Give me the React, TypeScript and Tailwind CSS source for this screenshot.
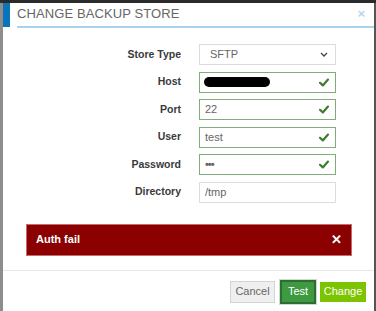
const Check = () => (
  <svg width="10" height="9" viewBox="0 0 10 9" className="absolute right-[7px] top-[6px]">
    <path d="M1 4.8 L3.8 7.4 L9 1.6" fill="none" stroke="#3c7d2c" strokeWidth="2.2" strokeLinecap="round" strokeLinejoin="round" />
  </svg>
)

const Field = ({ label, children }: { label: string; children: React.ReactNode }) => (
  <div className="flex items-center h-[21px]">
    <span className="w-[178px] text-right text-[10.5px] font-bold text-[#3a3a3a]">{label}</span>
    <div className="ml-[18px] w-[137px] h-full relative">{children}</div>
  </div>
)

const okBox = "h-full w-full border border-[#7fae79] bg-white pl-[5px] flex items-center text-[11px] text-[#666]"
const plainBox = "h-full w-full border border-[#dcdcdc] bg-white pl-[5px] flex items-center text-[11px] text-[#666]"

export default function App() {
  return (
    <div className="w-[376px] h-[311px] bg-[#2b2b2b] overflow-hidden flex flex-col" style={{ fontFamily: '"Liberation Sans", Arial, sans-serif' }}>
      <div className="h-[3px] shrink-0" />
      <div className="flex flex-1">
        <div className="w-[3px] bg-[#8d8d8d]" />
        <div className="flex-1 bg-white flex flex-col">
          {/* header */}
          <div className="flex h-[25px]">
            <div className="w-[7px] h-[24px] bg-[#0a74bb]" />
            <div className="flex-1 ml-[7px] border-b-2 border-[#a9d2ee] flex items-center justify-between pr-[9px]">
              <span className="text-[13px] text-[#666] tracking-[0.1px] mt-[-1px]">CHANGE BACKUP STORE</span>
              <span className="text-[13px] font-bold text-[#b9d6ec] mt-[-2px]">×</span>
            </div>
          </div>

          {/* form */}
          <div className="mt-[16px] flex flex-col gap-[6.5px]">
            <Field label="Store Type">
              <div className={plainBox + " justify-between pr-[7px] pl-[10px]"}>
                <span>SFTP</span>
                <svg width="8" height="5" viewBox="0 0 8 5">
                  <path d="M1 1 L4 4 L7 1" fill="none" stroke="#444" strokeWidth="1.3" />
                </svg>
              </div>
            </Field>
            <Field label="Host">
              <div className={okBox}>
                <div className="w-[66px] h-[10px] rounded-full bg-black ml-[-1px]" />
              </div>
              <Check />
            </Field>
            <Field label="Port">
              <div className={okBox}>22</div>
              <Check />
            </Field>
            <Field label="User">
              <div className={okBox}>test</div>
              <Check />
            </Field>
            <Field label="Password">
              <div className={okBox + " tracking-[-1px] font-bold"}>•••</div>
              <Check />
            </Field>
            <Field label="Directory">
              <div className={plainBox}>/tmp</div>
            </Field>
          </div>

          {/* alert */}
          <div className="mt-[21px] ml-[23px] w-[326px] h-[32px] bg-[#8b0000] border border-[#c86a6a] flex items-center justify-between px-[9px]">
            <span className="text-[11px] font-bold text-white">Auth fail</span>
            <span className="text-[13px] font-bold text-white">✕</span>
          </div>

          {/* footer */}
          <div className="mt-[14px] border-t border-[#e6e6e6] flex justify-end items-center gap-[4px] pt-[9px] pr-[8px]">
            <button className="h-[22px] w-[45px] bg-[#efefef] border border-[#d4d4d4] text-[11px] text-[#666]">Cancel</button>
            <button className="h-[24px] w-[36px] ml-[1px] bg-[#3d9a41] border-2 border-[#2f6b33] outline outline-1 outline-[#c9dfc9] text-[11px] text-white">Test</button>
            <button className="h-[20px] w-[46px] bg-[#7cc400] text-[11px] text-white">Change</button>
          </div>
        </div>
        <div className="w-[2px] bg-[#555]" />
      </div>
    </div>
  )
}
